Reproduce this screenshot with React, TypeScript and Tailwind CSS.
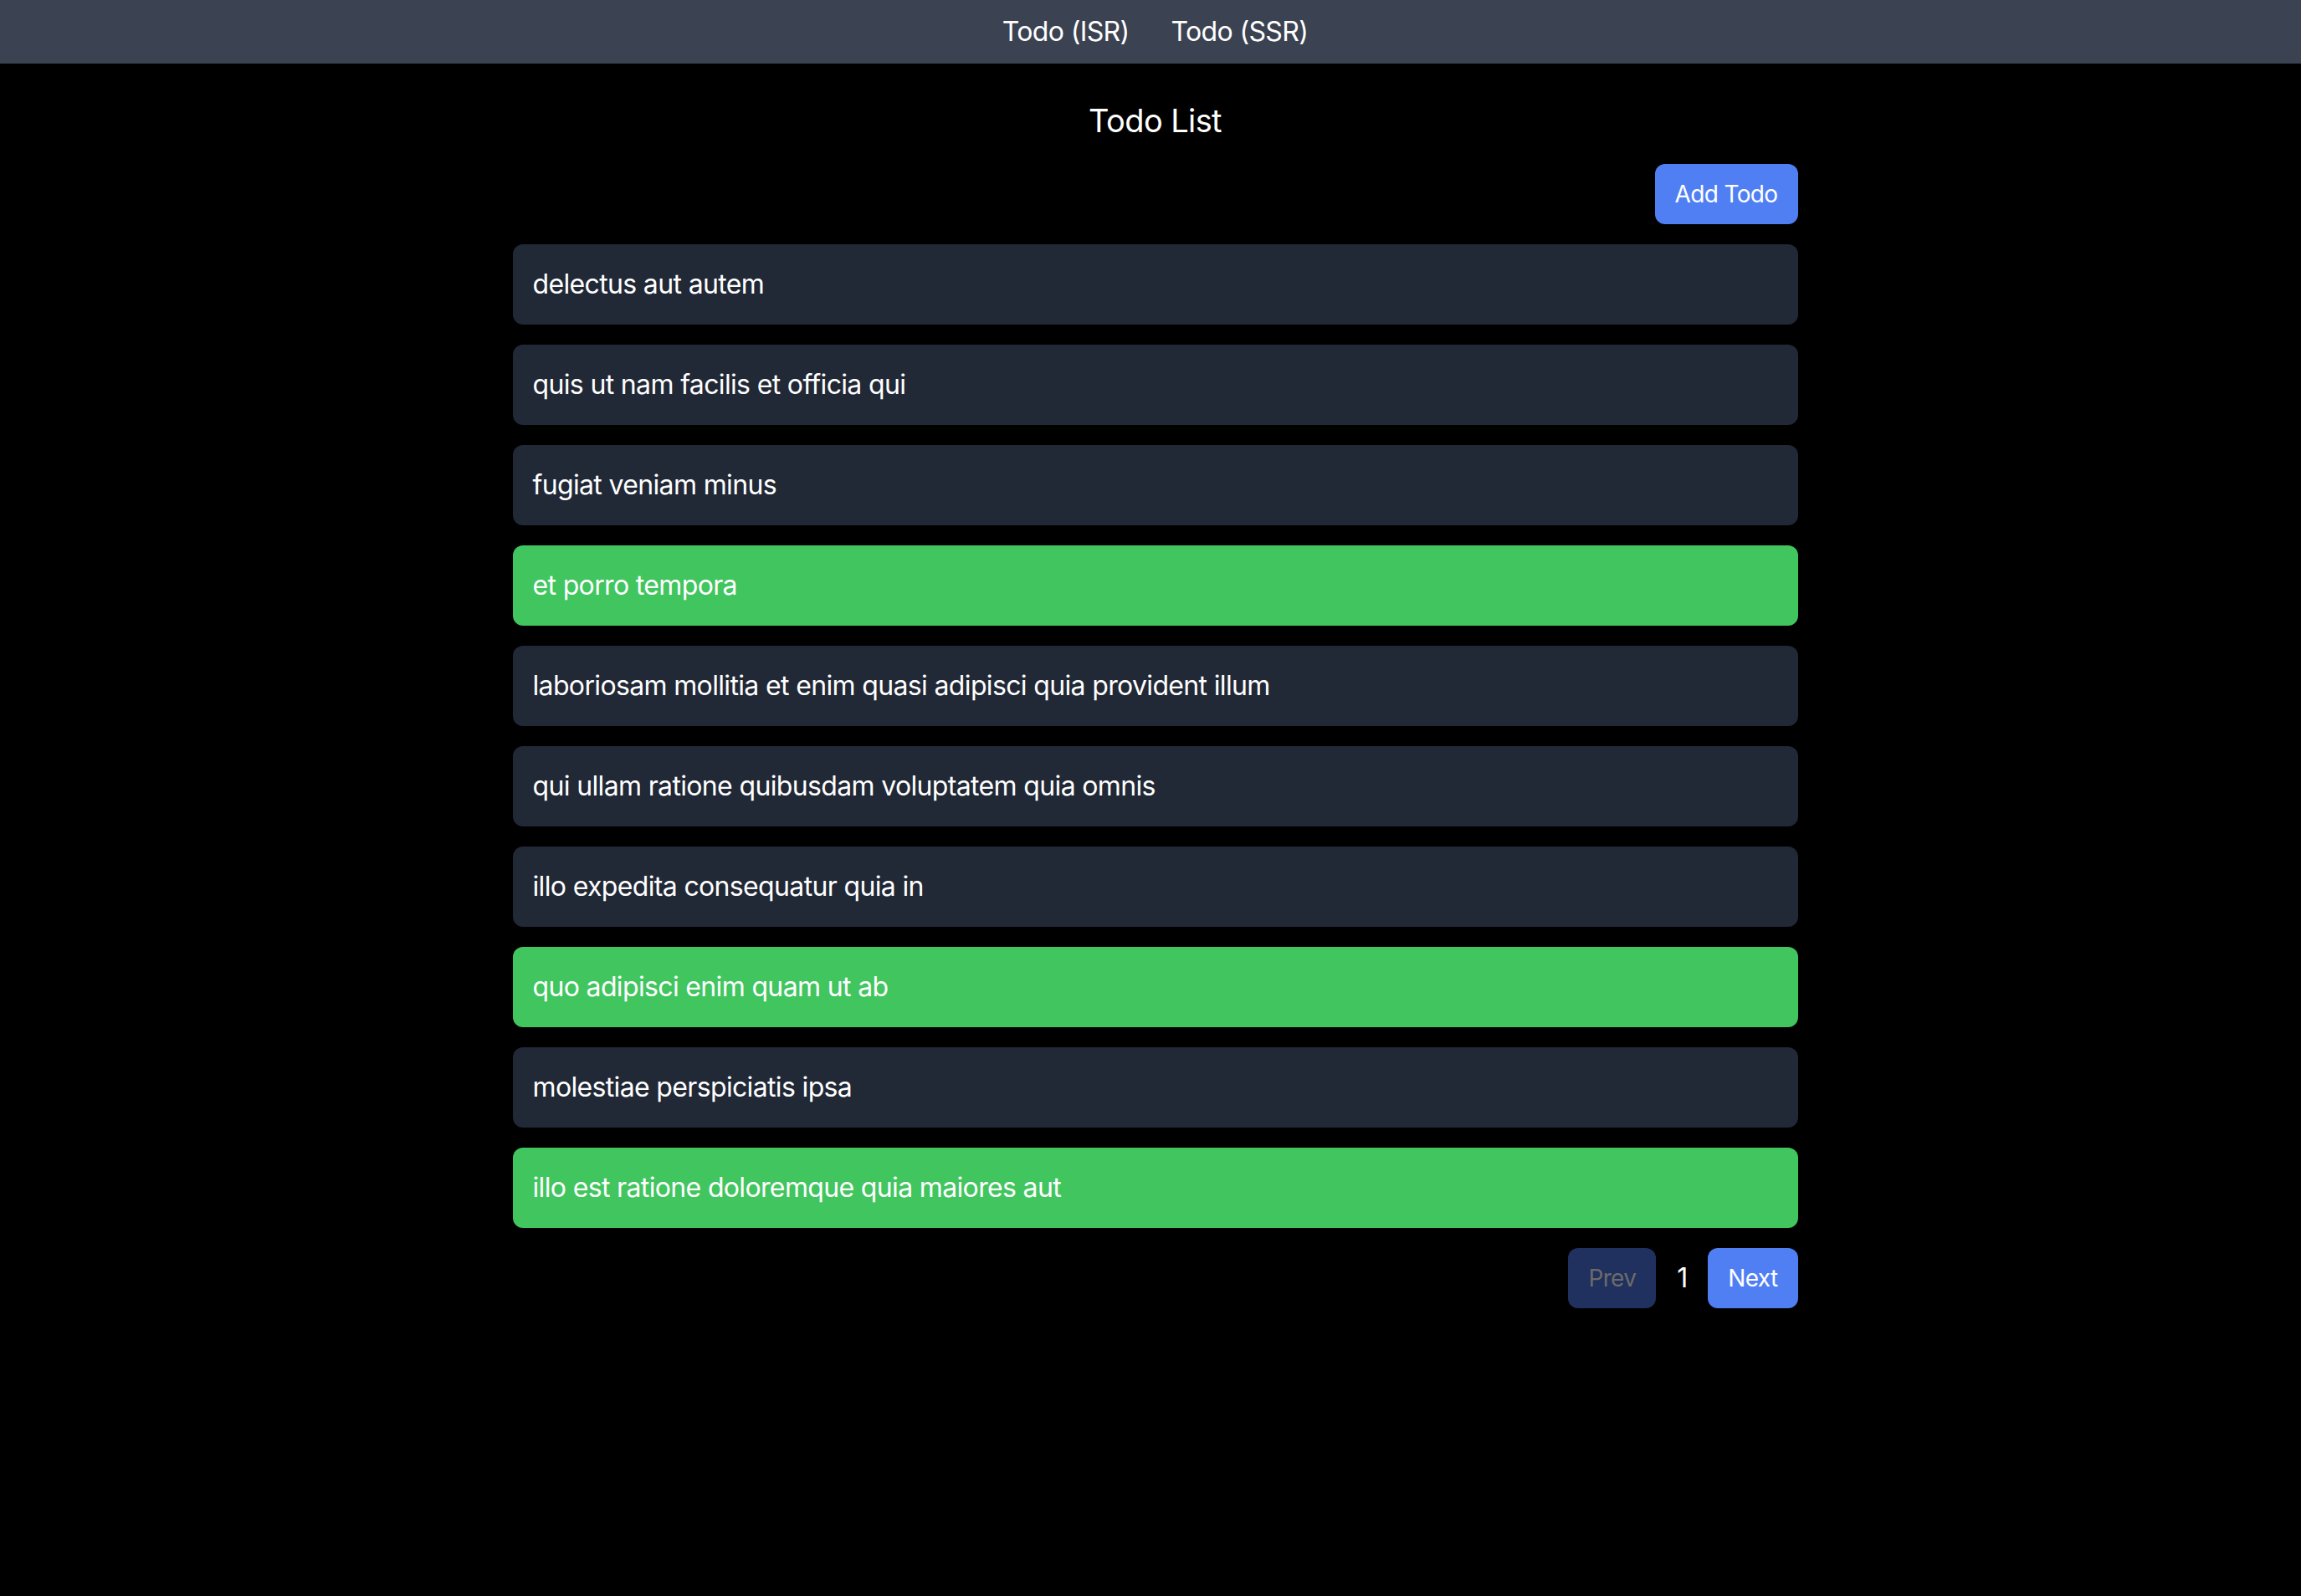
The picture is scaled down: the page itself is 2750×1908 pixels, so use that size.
const todos = [
  { id: 1, title: 'delectus aut autem', completed: false },
  { id: 2, title: 'quis ut nam facilis et officia qui', completed: false },
  { id: 3, title: 'fugiat veniam minus', completed: false },
  { id: 4, title: 'et porro tempora', completed: true },
  { id: 5, title: 'laboriosam mollitia et enim quasi adipisci quia provident illum', completed: false },
  { id: 6, title: 'qui ullam ratione quibusdam voluptatem quia omnis', completed: false },
  { id: 7, title: 'illo expedita consequatur quia in', completed: false },
  { id: 8, title: 'quo adipisci enim quam ut ab', completed: true },
  { id: 9, title: 'molestiae perspiciatis ipsa', completed: false },
  { id: 10, title: 'illo est ratione doloremque quia maiores aut', completed: true },
];

function NavBar() {
  return (
    <nav className="flex h-[76px] items-center justify-center gap-[50px] bg-[#3b4252] pl-[11px] text-[32px] leading-[48px] text-white">
      <a href="#">Todo (ISR)</a>
      <a href="#">Todo (SSR)</a>
    </nav>
  );
}

export default function App() {
  return (
    <div
      className="min-h-[1908px] bg-black tracking-[-0.65px] text-white"
      style={{ fontFamily: 'Inter, "Noto Sans", sans-serif' }}
    >
      <NavBar />
      <main className="flex justify-center pl-[11px] pt-[40px]">
        <div className="w-[1536px]">
          <h1 className="text-center text-[38px] leading-[56px] tracking-[-0.6px]">Todo List</h1>
          <div className="mt-[24px] flex justify-end">
            <button className="rounded-[12px] bg-[#507ff4] px-[24px] py-[16px] text-[28px] leading-[40px] text-white">
              Add Todo
            </button>
          </div>
          <ul className="mt-[24px] flex flex-col gap-[24px]">
            {todos.map((todo) => (
              <li
                key={todo.id}
                className={
                  todo.completed
                    ? 'rounded-[12px] bg-[#41c55f] px-[24px] py-[24px] text-[32px] leading-[48px]'
                    : 'rounded-[12px] bg-[#212836] px-[24px] py-[24px] text-[32px] leading-[48px]'
                }
              >
                {todo.title}
              </li>
            ))}
          </ul>
          <div className="mt-[24px] flex items-center justify-end gap-[21px]">
            <button disabled className="rounded-[12px] bg-[#20305f] px-[24px] py-[16px] text-[28px] leading-[40px] text-[#6b6b6b]">
              Prev
            </button>
            <span className="w-[20px] text-center text-[32px] leading-[48px]">1</span>
            <button className="rounded-[12px] bg-[#507ff4] px-[24px] py-[16px] text-[28px] leading-[40px] text-white">
              Next
            </button>
          </div>
        </div>
      </main>
    </div>
  );
}
